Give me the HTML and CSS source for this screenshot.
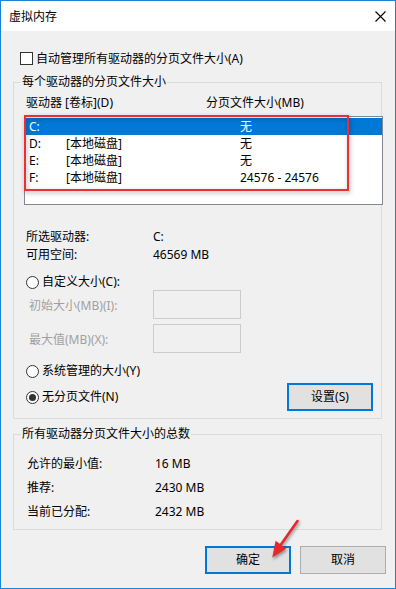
FILE: index.html
```html
<!DOCTYPE html>
<html lang="zh-CN">
<head>
<meta charset="utf-8">
<title>虚拟内存</title>
<link rel="stylesheet" href="styles.css">
</head>
<body>
<div class="window">
  <div class="titlebar">
    <span class="title">虚拟内存</span>
    <svg class="close" width="11" height="11" viewBox="0 0 11 11"><path d="M0.5 0.5 L10.5 10.5 M10.5 0.5 L0.5 10.5" stroke="#000" stroke-width="1.1" fill="none"/></svg>
  </div>
  <div class="content">
    <div class="check-row">
      <span class="checkbox"></span>
      <span>自动管理所有驱动器的分页文件大小(A)</span>
    </div>

    <div class="group group-drives">
      <div class="g-title">每个驱动器的分页文件大小</div>
      <div class="col-head">
        <span class="ch-drive">驱动器 [卷标](D)</span>
        <span>分页文件大小(MB)</span>
      </div>
      <div class="listbox">
        <div class="lrow selected"><span class="c-letter">C:</span><span class="c-label"></span><span>无</span></div>
        <div class="lrow"><span class="c-letter">D:</span><span class="c-label">[本地磁盘]</span><span>无</span></div>
        <div class="lrow"><span class="c-letter">E:</span><span class="c-label">[本地磁盘]</span><span>无</span></div>
        <div class="lrow"><span class="c-letter">F:</span><span class="c-label">[本地磁盘]</span><span>24576 - 24576</span></div>
      </div>
      <div class="info">
        <div class="irow"><span class="i-label">所选驱动器:</span><span>C:</span></div>
        <div class="irow"><span class="i-label">可用空间:</span><span>46569 MB</span></div>
      </div>
      <div class="radio-row r-custom"><span class="radio"></span><span>自定义大小(C):</span></div>
      <div class="fields">
        <div class="frow"><span class="f-label">初始大小(MB)(I):</span><span class="input"></span></div>
        <div class="frow"><span class="f-label">最大值(MB)(X):</span><span class="input"></span></div>
      </div>
      <div class="radio-row r-system"><span class="radio"></span><span>系统管理的大小(Y)</span></div>
      <div class="last-row">
        <div class="radio-item"><span class="radio checked"></span><span>无分页文件(N)</span></div>
        <button class="btn btn-focus">设置(S)</button>
      </div>
    </div>

    <div class="group group-total">
      <div class="g-title">所有驱动器分页文件大小的总数</div>
      <div class="totals">
        <div class="trow"><span class="t-label">允许的最小值:</span><span>16 MB</span></div>
        <div class="trow"><span class="t-label">推荐:</span><span>2430 MB</span></div>
        <div class="trow"><span class="t-label">当前已分配:</span><span>2432 MB</span></div>
      </div>
    </div>

    <div class="actions">
      <button class="btn btn-focus">确定</button>
      <button class="btn">取消</button>
    </div>
  </div>

  <svg class="overlay" width="396" height="589" viewBox="0 0 396 589">
    <rect class="hl" x="25" y="116" width="323" height="74" fill="none" stroke="#ec2f36" stroke-width="2"/>
    <g class="arrow">
      <line x1="297.5" y1="521" x2="281" y2="544.5" stroke="#e8262b" stroke-width="2.6" stroke-linecap="round"/>
      <polygon points="272.3,557.5 286.2,548.6 275.6,540.8" fill="#e8262b"/>
    </g>
  </svg>
</div>
</body>
</html>
```

FILE: styles.css
```css
html, body {
  margin: 0;
  padding: 0;
  background: #f0f0f0;
}

body {
  font-family: "Noto Sans", "Noto Sans CJK SC", sans-serif;
  font-size: 12px;
  color: #000;
}

.window {
  position: relative;
  box-sizing: border-box;
  width: 396px;
  height: 589px;
  border: 1px solid #1883d7;
  background: #f0f0f0;
  overflow: hidden;
}

.titlebar {
  height: 30px;
  background: #fff;
  display: flex;
  align-items: center;
  justify-content: space-between;
  padding: 0 9px 0 8px;
}

.title {
  font-size: 12px;
  line-height: 16px;
  margin-top: 1px;
}

.close {
  display: block;
}

.content {
  padding: 0 13px 0 12px;
}

.check-row {
  display: flex;
  align-items: flex-start;
  gap: 3px;
  margin: 20px 0 0 7px;
  line-height: 16px;
}

.checkbox {
  box-sizing: border-box;
  width: 13px;
  height: 13px;
  border: 1px solid #333;
  background: #fff;
  margin-top: 1px;
  flex: none;
}

.group {
  box-sizing: border-box;
  width: 369px;
  border: 1px solid #dcdcdc;
}

.group-drives {
  margin-top: 15px;
  padding-bottom: 7px;
}

.group-total {
  margin-top: 15px;
  padding-bottom: 5px;
}

.g-title {
  width: max-content;
  margin: -9px 0 0 7px;
  padding: 0 1px;
  background: #f0f0f0;
  line-height: 16px;
}

.col-head {
  display: flex;
  margin-top: 5px;
  padding-left: 12px;
  line-height: 16px;
}

.ch-drive {
  width: 180px;
}

.listbox {
  box-sizing: border-box;
  width: 359px;
  height: 89px;
  margin: 5px 0 0 10px;
  padding-top: 1px;
  border: 1px solid #828790;
  background: #fff;
}

.lrow {
  display: flex;
  height: 17px;
  line-height: 17px;
  padding-left: 4px;
}

.lrow.selected {
  background: #0078d7;
  color: #fff;
}

.c-letter {
  width: 37px;
}

.c-label {
  width: 174px;
}

.info {
  margin-top: 23px;
  padding-left: 12px;
}

.irow {
  display: flex;
  line-height: 18px;
}

.i-label {
  width: 127px;
}

.radio-row,
.radio-item {
  display: flex;
  align-items: center;
  gap: 3px;
  line-height: 16px;
}

.radio-row {
  padding-left: 12px;
}

.r-custom {
  margin-top: 10px;
}

.r-system {
  margin-top: 10px;
}

.radio {
  position: relative;
  box-sizing: border-box;
  width: 13px;
  height: 13px;
  border: 1px solid #333;
  border-radius: 50%;
  background: #fff;
  flex: none;
}

.radio.checked::after {
  content: "";
  position: absolute;
  left: 2px;
  top: 2px;
  width: 7px;
  height: 7px;
  border-radius: 50%;
  background: #333;
}

.fields {
  display: flex;
  flex-direction: column;
  gap: 5px;
  padding-left: 15px;
}

.frow {
  display: flex;
  align-items: center;
  height: 29px;
}

.f-label {
  width: 124px;
  color: #a0a0a0;
  line-height: 16px;
  margin-top: 2px;
}

.input {
  box-sizing: border-box;
  width: 88px;
  height: 29px;
  border: 1px solid #cccccc;
  background: #f0f0f0;
}

.last-row {
  display: flex;
  align-items: center;
  justify-content: space-between;
  height: 28px;
  margin-top: 4px;
  padding: 0 8px 0 12px;
}

.btn {
  box-sizing: border-box;
  width: 86px;
  height: 28px;
  margin: 0;
  padding: 0;
  border: 1px solid #adadad;
  background: #e1e1e1;
  font-family: "Noto Sans", "Noto Sans CJK SC", sans-serif;
  font-size: 12px;
  color: #000;
  line-height: 16px;
}

.btn-focus {
  border: 2px solid #0078d7;
}

.totals {
  margin-top: 10px;
  padding-left: 13px;
}

.trow {
  display: flex;
  line-height: 24px;
}

.t-label {
  width: 128px;
}

.actions {
  display: flex;
  justify-content: flex-end;
  gap: 9px;
  margin: 16px -4px 0 0;
}

.overlay {
  position: absolute;
  left: -1px;
  top: -1px;
  pointer-events: none;
}

.hl {
  filter: drop-shadow(1px 2px 2px rgba(0, 0, 0, 0.35));
}

.arrow {
  filter: drop-shadow(1px 2px 1.5px rgba(0, 0, 0, 0.4));
}
```
